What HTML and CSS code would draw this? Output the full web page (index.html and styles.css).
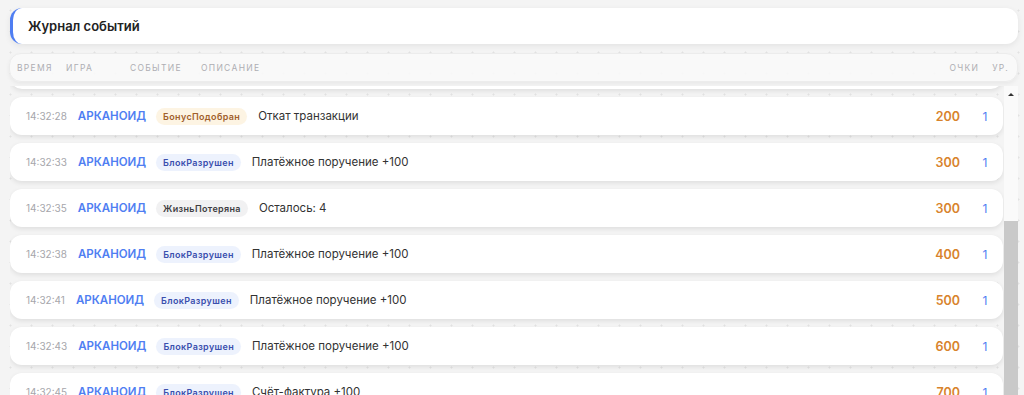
FILE: index.html
```html
<!DOCTYPE html>
<html lang="ru">

<head>
    <meta charset="UTF-8">
    <meta name="viewport" content="width=device-width, initial-scale=1.0">

    <link rel="stylesheet" href="styles.css">
    <title>Журнал событий</title>
</head>

<body>

    <div class="page">
        <div class="title-card">
            <h1>Журнал событий</h1>
        </div>

        <div class="head-row">
            <span class="h-time">Время</span>
            <span class="h-game">Игра</span>
            <span class="h-event">Событие</span>
            <span class="h-desc">Описание</span>
            <span class="h-pts">Очки</span>
            <span class="h-lvl">Ур.</span>
        </div>

        <div class="log">
            <div class="rows">
                <div class="row row-cut"></div> <!-- строка, ушедшая вверх при прокрутке -->
                <div class="row">
                    <span class="time">14:32:28</span>
                    <span class="game">АРКАНОИД</span>
                    <span class="tag tag-bonus">БонусПодобран</span>
                    <span class="desc">Откат транзакции</span>
                    <span class="pts">200</span>
                    <span class="lvl">1</span>
                </div>
                <div class="row">
                    <span class="time">14:32:33</span>
                    <span class="game">АРКАНОИД</span>
                    <span class="tag tag-block">БлокРазрушен</span>
                    <span class="desc">Платёжное поручение +100</span>
                    <span class="pts">300</span>
                    <span class="lvl">1</span>
                </div>
                <div class="row">
                    <span class="time">14:32:35</span>
                    <span class="game">АРКАНОИД</span>
                    <span class="tag tag-life">ЖизньПотеряна</span>
                    <span class="desc">Осталось: 4</span>
                    <span class="pts">300</span>
                    <span class="lvl">1</span>
                </div>
                <div class="row">
                    <span class="time">14:32:38</span>
                    <span class="game">АРКАНОИД</span>
                    <span class="tag tag-block">БлокРазрушен</span>
                    <span class="desc">Платёжное поручение +100</span>
                    <span class="pts">400</span>
                    <span class="lvl">1</span>
                </div>
                <div class="row">
                    <span class="time">14:32:41</span>
                    <span class="game">АРКАНОИД</span>
                    <span class="tag tag-block">БлокРазрушен</span>
                    <span class="desc">Платёжное поручение +100</span>
                    <span class="pts">500</span>
                    <span class="lvl">1</span>
                </div>
                <div class="row">
                    <span class="time">14:32:43</span>
                    <span class="game">АРКАНОИД</span>
                    <span class="tag tag-block">БлокРазрушен</span>
                    <span class="desc">Платёжное поручение +100</span>
                    <span class="pts">600</span>
                    <span class="lvl">1</span>
                </div>
                <div class="row">
                    <span class="time">14:32:45</span>
                    <span class="game">АРКАНОИД</span>
                    <span class="tag tag-block">БлокРазрушен</span>
                    <span class="desc">Счёт-фактура +100</span>
                    <span class="pts">700</span>
                    <span class="lvl">1</span>
                </div>
            </div>

            <div class="scrollbar"> <!-- полоса прокрутки -->
                <span class="arrow"></span>
                <span class="thumb"></span>
            </div>
        </div>
    </div>

</body>

</html>
```

FILE: styles.css
```css
body {
    margin: 0;
    background-color: #f4f4f4;
    background-image: radial-gradient(circle, #e2e2e2 0.8px, transparent 1.3px);
    background-size: 21px 21px;
    background-position: 0 0;
    font-family: "Inter", "Liberation Sans", sans-serif;
    color: #2a2a2a;
    height: 395px;
    overflow: hidden;
}

.page {
    padding: 8px 6px 0 10px;
}

.title-card {
    height: 36px;
    display: flex;
    align-items: center;
    padding-left: 15px;
    background-color: #fff;
    border-left: 3px solid #4f7ef2;
    border-radius: 12px;
    box-shadow: 0 2px 6px rgba(0, 0, 0, 0.07);
}

.title-card h1 {
    margin: 0;
    font-size: 13px;
    font-weight: 600;
    color: #222;
}

.head-row {
    margin: 9px 0 0 -1px;
    height: 27px;
    display: flex;
    align-items: center;
    padding: 0 8px 0 7px;
    background-color: rgba(250, 250, 250, 0.9);
    border: 1px solid #ececec;
    border-radius: 12px;
    box-shadow: 0 2px 4px rgba(0, 0, 0, 0.05);
    font-size: 8.5px;
    line-height: 12px;
    letter-spacing: 1.3px;
    text-transform: uppercase;
    white-space: nowrap;
    color: #aeaeb3;
}

.h-time {
    width: 49px;
}

.h-game {
    width: 64px;
}

.h-event {
    width: 71px;
}

.h-desc {
    flex: 1;
}

.h-pts {
    margin-right: 13px;
}

.log {
    margin-top: 4px;
    display: flex;
    height: 320px;
    overflow: hidden;
}

.rows {
    flex: 1;
    display: flex;
    flex-direction: column;
    gap: 8px;
}

.row {
    flex: none;
    height: 38px;
    display: flex;
    align-items: center;
    gap: 11px;
    padding: 0 8px 0 16px;
    background-color: #fff;
    border-radius: 12px;
    box-shadow: 0 2px 5px rgba(0, 0, 0, 0.09);
    white-space: nowrap;
}

.row-cut {
    margin-top: -35px;
}

.time {
    font-size: 10px;
    color: #a6a6ab;
}

.game {
    font-size: 11.5px;
    font-weight: 600;
    color: #4f7ef2;
}

.tag {
    margin-left: -1px;
    font-size: 9px;
    font-weight: 600;
    letter-spacing: 0.35px;
    padding: 3px 7px;
    border-radius: 9px;
}

.tag-bonus {
    background-color: #fdf4e3;
    color: #a1602b;
}

.tag-block {
    background-color: #edf2fd;
    color: #3a4fae;
}

.tag-life {
    background-color: #f1f1f2;
    color: #3e3e42;
}

.desc {
    font-size: 11.5px;
    color: #333;
}

.pts {
    margin-left: auto;
    font-size: 12.5px;
    font-weight: 600;
    color: #d8832c;
}

.lvl {
    width: 20px;
    margin-left: 4px;
    text-align: center;
    font-size: 12px;
    color: #4f7ef2;
}

.scrollbar {
    flex: none;
    width: 14px;
    margin-left: 1px;
    display: flex;
    flex-direction: column;
    align-items: center;
    background-color: #fafafa;
}

.arrow {
    margin-top: 7px;
    width: 0;
    height: 0;
    border-left: 3px solid transparent;
    border-right: 3px solid transparent;
    border-bottom: 3px solid #333;
}

.thumb {
    margin-top: 125px;
    width: 14px;
    flex: 1;
    background-color: #c9c9c9;
}
```
